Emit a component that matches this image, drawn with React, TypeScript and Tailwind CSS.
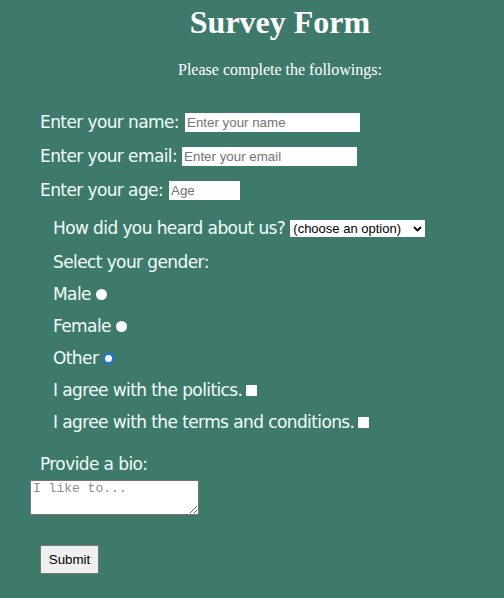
export default function App() {
  const label = "font-['DejaVu_Sans',sans-serif] text-[17px] leading-[19px] tracking-[-0.6px] text-[#f0fff8]"
  const field =
    "h-[19px] bg-white px-[2px] font-['Liberation_Sans',Arial,sans-serif] text-[13.33px] text-black placeholder:text-[#757575] outline-none"

  return (
    <div className="min-h-[598px] w-[504px] bg-[#3e7a6b] pt-[4px]">
      {/* Заголовок */}
      <div className="pl-[56px] text-center font-['Liberation_Serif',serif] text-white">
        <h1 className="text-[32px] font-bold leading-[36px]">Survey Form</h1>
        <p className="mt-[21px] text-[16px] leading-[18px]">Please complete the followings:</p>
      </div>

      <form className="mt-[34px]">
        {/* Основные поля */}
        <div className="flex flex-col gap-[15px] pl-[40px]">
          <div className="flex h-[19px] items-center gap-[6px]">
            <label className={label}>Enter your name:</label>
            <input className={`${field} w-[175px]`} placeholder="Enter your name" />
          </div>
          <div className="flex h-[19px] items-center gap-[5px]">
            <label className={label}>Enter your email:</label>
            <input className={`${field} w-[175px]`} placeholder="Enter your email" />
          </div>
          <div className="flex h-[19px] items-center gap-[6px]">
            <label className={label}>Enter your age:</label>
            <input className={`${field} w-[71px]`} placeholder="Age" />
          </div>
        </div>

        {/* Вопросы */}
        <div className="mt-[19px] flex flex-col gap-[13px] pl-[53px]">
          <div className="flex h-[19px] items-center gap-[5px]">
            <span className={label}>How did you heard about us?</span>
            <div className="flex h-[17px] w-[135px] items-center justify-between bg-white pl-[3px] pr-[3px] font-['Liberation_Sans',Arial,sans-serif] text-[13px] text-black">
              <span>(choose an option)</span>
              <svg width="9" height="6" viewBox="0 0 9 6">
                <path d="M1 1l3.5 3.5L8 1" stroke="black" strokeWidth="1.8" fill="none" />
              </svg>
            </div>
          </div>
          <div className="mt-[2px] flex h-[19px] items-center">
            <span className={label}>Select your gender:</span>
          </div>
          <div className="flex h-[19px] items-center gap-[5px]">
            <span className={label}>Male</span>
            <span className="h-[11px] w-[11px] rounded-full bg-white" />
          </div>
          <div className="flex h-[19px] items-center gap-[5px]">
            <span className={label}>Female</span>
            <span className="h-[11px] w-[11px] rounded-full bg-white" />
          </div>
          <div className="flex h-[19px] items-center gap-[5px]">
            <span className={label}>Other</span>
            <span className="h-[11px] w-[11px] rounded-full border-[2px] border-[#1a73e8] bg-white" />
          </div>
          <div className="flex h-[19px] items-center gap-[4px]">
            <span className={label}>I agree with the politics.</span>
            <span className="h-[11px] w-[11px] bg-white" />
          </div>
          <div className="flex h-[19px] items-center gap-[4px]">
            <span className={label}>I agree with the terms and conditions.</span>
            <span className="h-[11px] w-[11px] bg-white" />
          </div>
        </div>

        {/* Био */}
        <div className="mt-[23px] flex h-[19px] items-center pl-[40px]">
          <span className={label}>Provide a bio:</span>
        </div>
        <div className="mt-[6px] pl-[30px]">
          <textarea
            className="block h-[35px] w-[169px] resize border border-[#767676] bg-white px-[2px] font-['Liberation_Mono',monospace] text-[13px] leading-[15px] text-black placeholder:text-[#8a8a8a] outline-none"
            placeholder="I like to..."
          />
        </div>

        <div className="mt-[30px] pl-[40px]">
          <button
            type="button"
            className="h-[29px] w-[59px] border border-[#767676] bg-[#efefef] font-['Liberation_Sans',Arial,sans-serif] text-[13.33px] text-black"
          >
            Submit
          </button>
        </div>
      </form>
    </div>
  )
}
